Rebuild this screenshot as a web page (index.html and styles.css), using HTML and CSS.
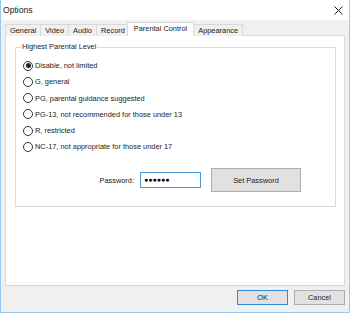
FILE: index.html
```html
<!DOCTYPE html>
<html lang="en">
<head>
    <meta charset="UTF-8">
    <title>Options</title>
    <link rel="stylesheet" href="styles.css">
</head>
<body>
    <div class="window">
        <div class="titlebar">
            <span class="title">Options</span>
            <svg class="close" width="9" height="9" viewBox="0 0 9 9">
                <path d="M0.5 0.5 L8.5 8.5 M8.5 0.5 L0.5 8.5" stroke="#1a1a1a" stroke-width="1" fill="none"/>
            </svg>
        </div>
        <div class="content">
            <div class="tabs">
                <div class="tab">General</div>
                <div class="tab">Video</div>
                <div class="tab">Audio</div>
                <div class="tab">Record</div>
                <div class="tab active">Parental Control</div>
                <div class="tab">Appearance</div>
            </div>
            <div class="panel">
                <div class="group">
                    <div class="legend">Highest Parental Level</div>
                    <div class="options">
                        <label class="radio"><span class="dot checked"></span>Disable, not limited</label>
                        <label class="radio"><span class="dot"></span>G, general</label>
                        <label class="radio"><span class="dot"></span>PG, parental guidance suggested</label>
                        <label class="radio"><span class="dot"></span>PG-13, not recommended for those under 13</label>
                        <label class="radio"><span class="dot"></span>R, restricted</label>
                        <label class="radio"><span class="dot"></span>NC-17, not appropriate for those under 17</label>
                    </div>
                    <div class="password-row">
                        <span class="pw-label">Password:</span>
                        <div class="pw-input">&#9679;&#9679;&#9679;&#9679;&#9679;&#9679;</div>
                        <button class="btn set-btn">Set Password</button>
                    </div>
                </div>
            </div>
            <div class="footer">
                <button class="btn ok">OK</button>
                <button class="btn">Cancel</button>
            </div>
        </div>
    </div>
</body>
</html>
```

FILE: styles.css
```css
* {
    box-sizing: border-box;
    margin: 0;
    padding: 0;
    font-family: 'Liberation Sans', Arial, sans-serif;
}

body {
    width: 350px;
    height: 313px;
    background-color: #fff;
    color: #000;
    font-size: 7.4px;
}

.window {
    width: 350px;
    height: 313px;
    border: 1px solid #99c9f1;
    border-top: none;
    display: flex;
    flex-direction: column;
    background-color: #f0f0f0;
}

/* Title bar */
.titlebar {
    height: 20px;
    background-color: #fff;
    display: flex;
    align-items: center;
    justify-content: space-between;
    padding: 0 6px 0 2px;
}

.title {
    font-size: 8.6px;
    color: #222;
}

.close {
    display: block;
}

/* Content */
.content {
    flex: 1;
    padding: 3px 4px 0 4px;
    display: flex;
    flex-direction: column;
}

.tabs {
    display: flex;
    height: 13px;
    align-items: flex-end;
    position: relative;
    z-index: 1;
    margin-bottom: -1px;
}

.tab {
    height: 12px;
    padding: 0 4px;
    border: 1px solid #d9d9d9;
    border-bottom: none;
    margin-right: -1px;
    line-height: 11px;
    background-color: #f0f0f0;
    color: #222;
}

.tab.active {
    height: 14px;
    margin: 0 -1px 0 -2px;
    padding: 0 6px;
    background-color: #fff;
    line-height: 12px;
    position: relative;
}

.panel {
    height: 251px;
    background-color: #fff;
    border: 1px solid #d9d9d9;
    padding: 11px 8px 0 9px;
}

/* Group box */
.group {
    height: 160px;
    border: 1px solid #dcdcdc;
    position: relative;
    padding: 12px 0 0 7px;
}

.legend {
    position: absolute;
    top: -6px;
    left: 5px;
    padding: 0 1px;
    background-color: #fff;
    color: #222;
}

.options {
    display: flex;
    flex-direction: column;
    gap: 5.3px;
}

.radio {
    display: flex;
    align-items: center;
    height: 11px;
    color: #222;
}

.dot {
    width: 10px;
    height: 10px;
    border: 1px solid #333;
    border-radius: 50%;
    margin-right: 2px;
    display: flex;
    align-items: center;
    justify-content: center;
}

.dot.checked::after {
    content: "";
    width: 5px;
    height: 5px;
    border-radius: 50%;
    background-color: #222;
}

.password-row {
    display: flex;
    align-items: center;
    margin-top: 16px;
    padding-left: 0;
}

.pw-label {
    width: 111px;
    text-align: right;
    color: #222;
    margin-right: 6px;
}

.pw-input {
    width: 61px;
    height: 16px;
    border: 1px solid #4a9ad9;
    padding-left: 3px;
    font-size: 7px;
    line-height: 14px;
    color: #000;
}

.btn {
    background-color: #e1e1e1;
    border: 1px solid #adadad;
    color: #222;
    font-size: 7.4px;
    font-family: 'Liberation Sans', Arial, sans-serif;
}

.set-btn {
    width: 90px;
    height: 24px;
    margin-left: 10px;
}

/* Footer buttons */
.footer {
    display: flex;
    justify-content: flex-end;
    gap: 6px;
    padding-top: 4px;
}

.footer .btn {
    width: 51px;
    height: 15px;
}

.footer .ok {
    border: 1px solid #2f8bd8;
}
```
